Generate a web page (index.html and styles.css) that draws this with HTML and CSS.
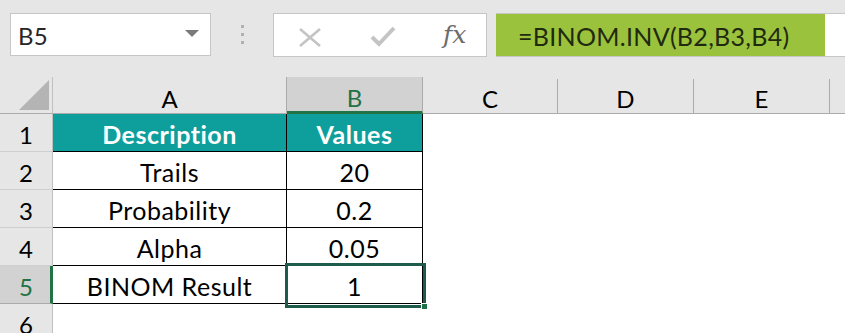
FILE: index.html
```html
<!DOCTYPE html>
<html>
<head>
<meta charset="utf-8">
<link rel="stylesheet" href="styles.css">
</head>
<body>
<div class="app">
  <div class="toolbar">
    <div class="namebox">
      <span class="name">B5</span>
      <svg class="caret" width="14" height="8" viewBox="0 0 14 8"><polygon points="0,0 14,0 7,7" fill="#7a7a7a"/></svg>
    </div>
    <div class="dots"><i></i><i></i><i></i></div>
    <div class="fxbox">
      <svg class="ico-x" width="24" height="19" viewBox="0 0 24 19"><path d="M2 1 L22 18 M22 1 L2 18" stroke="#c4c4c4" stroke-width="2.6" fill="none"/></svg>
      <svg class="ico-check" width="26" height="21" viewBox="0 0 26 21"><path d="M2 11 L9 18 L24 2" stroke="#c4c4c4" stroke-width="4" fill="none" stroke-linejoin="miter"/></svg>
      <span class="fx">fx</span>
    </div>
    <div class="formula">
      <div class="formula-hl">=BINOM.INV(B2,B3,B4)</div>
    </div>
  </div>
  <div class="sheet">
    <div class="corner"><svg width="30" height="30" viewBox="0 0 30 30"><polygon points="0,30 30,0 30,30" fill="#b4b4b4"/></svg></div>
    <div class="ch">A</div>
    <div class="ch sel">B</div>
    <div class="ch">C</div>
    <div class="ch">D</div>
    <div class="ch">E</div>
    <div class="ch last"></div>

    <div class="rh">1</div>
    <div class="c t hd">Description</div>
    <div class="c t hd">Values</div>
    <div class="c e"></div><div class="c e"></div><div class="c e"></div><div class="c e"></div>

    <div class="rh">2</div>
    <div class="c t">Trails</div>
    <div class="c t">20</div>
    <div class="c e"></div><div class="c e"></div><div class="c e"></div><div class="c e"></div>

    <div class="rh">3</div>
    <div class="c t">Probability</div>
    <div class="c t">0.2</div>
    <div class="c e"></div><div class="c e"></div><div class="c e"></div><div class="c e"></div>

    <div class="rh">4</div>
    <div class="c t">Alpha</div>
    <div class="c t">0.05</div>
    <div class="c e"></div><div class="c e"></div><div class="c e"></div><div class="c e"></div>

    <div class="rh sel">5</div>
    <div class="c t">BINOM Result</div>
    <div class="c t active">1<span class="handle"></span></div>
    <div class="c e"></div><div class="c e"></div><div class="c e"></div><div class="c e"></div>

    <div class="rh">6</div>
    <div class="c e"></div><div class="c e"></div><div class="c e"></div><div class="c e"></div><div class="c e"></div><div class="c e"></div>
  </div>
</div>
</body>
</html>
```

FILE: styles.css
```css
* { box-sizing: border-box; }
html, body { margin: 0; padding: 0; }
body {
  width: 845px;
  height: 333px;
  overflow: hidden;
  background: #e6e6e6;
  font-family: Lato, "Liberation Sans", sans-serif;
  color: #000;
}
.app { display: flex; flex-direction: column; }
.toolbar {
  height: 77px;
  display: flex;
  align-items: flex-start;
  padding-top: 13px;
  padding-left: 10px;
}
.namebox {
  width: 201px;
  height: 43px;
  background: #fff;
  border: 1px solid #c6c6c6;
  display: flex;
  align-items: center;
  justify-content: space-between;
  padding: 1px 11px 0 7px;
}
.name { font-size: 24px; color: #262626; letter-spacing: 0.3px; }
.caret { margin-top: -3px; }
.dots {
  width: 62px;
  height: 43px;
  display: flex;
  flex-direction: column;
  align-items: center;
  justify-content: center;
  gap: 5px;
}
.dots i { display: block; width: 3px; height: 3px; background: #b0b0b0; }
.fxbox {
  width: 214px;
  height: 44px;
  background: #fff;
  border: 1px solid #c6c6c6;
  display: flex;
  align-items: center;
  padding-left: 24px;
}
.ico-x { margin-top: 4px; }
.ico-check { margin-left: 48px; margin-top: 2px; }
.fx {
  margin-left: 47px;
  font-family: "DejaVu Serif", "Liberation Serif", serif;
  font-style: italic;
  font-size: 25px;
  color: #6b6b6b;
  margin-top: -2px;
}
.formula {
  margin-left: 9px;
  flex: 1;
  height: 44px;
  background: #fff;
  border-top: 1px solid #c6c6c6;
  border-bottom: 1px solid #c6c6c6;
  display: flex;
}
.formula-hl {
  width: 329px;
  height: 100%;
  background: #9bc23c;
  color: #1f2a10;
  font-size: 25px;
  letter-spacing: 0.3px;
  display: flex;
  align-items: center;
  padding-left: 22px;
  padding-top: 1px;
  white-space: nowrap;
}
.sheet {
  display: grid;
  grid-template-columns: 53px 234px 136px 135px 136px 136px 15px;
  grid-template-rows: 37px repeat(6, 38px);
}
.corner {
  border-right: 1px solid #c0c0c0;
  border-bottom: 1px solid #ababab;
  display: flex;
  align-items: flex-end;
  justify-content: flex-end;
  padding: 0 3px 3px 0;
}
.corner svg { display: block; }
.ch {
  border-right: 1px solid #ababab;
  border-bottom: 1px solid #ababab;
  display: flex;
  align-items: center;
  justify-content: center;
  font-size: 24px;
  padding-top: 4px;
  margin-top: 2px;
}
.ch.last { border-right: none; }
.ch.sel {
  background: #d2d2d2;
  color: #217346;
  border-bottom: 3px solid #217346;
  padding-top: 6px;
  margin-top: 0;
  box-shadow: -1px 0 0 #ababab;
}
.rh {
  border-right: 1px solid #c0c0c0;
  border-bottom: 1px solid #cfcfcf;
  display: flex;
  align-items: center;
  justify-content: center;
  font-size: 24px;
  padding-top: 3px;
  color: #000;
}
.rh.sel {
  background: #d2d2d2;
  color: #217346;
  border-right: 3px solid #217346;
  border-bottom-color: #ababab;
  padding-left: 2px;
}
.c { background: #fff; }
.c.t {
  border-right: 1px solid #000;
  border-bottom: 1px solid #000;
  display: flex;
  align-items: center;
  justify-content: center;
  font-size: 25px;
  letter-spacing: 0.5px;
  padding-top: 3px;
  white-space: nowrap;
}
.c.hd {
  background: #0e9f9d;
  color: #fff;
  font-weight: 700;
}
.active {
  position: relative;
  z-index: 2;
}
.active::before {
  content: "";
  position: absolute;
  top: -3px;
  left: -2px;
  right: -4px;
  bottom: -5px;
  border: 3px solid #1d5c4c;
}
.handle {
  position: absolute;
  right: -6px;
  bottom: -7px;
  width: 7px;
  height: 7px;
  background: #1d7346;
  border: 1px solid #fff;
  z-index: 3;
}
```
